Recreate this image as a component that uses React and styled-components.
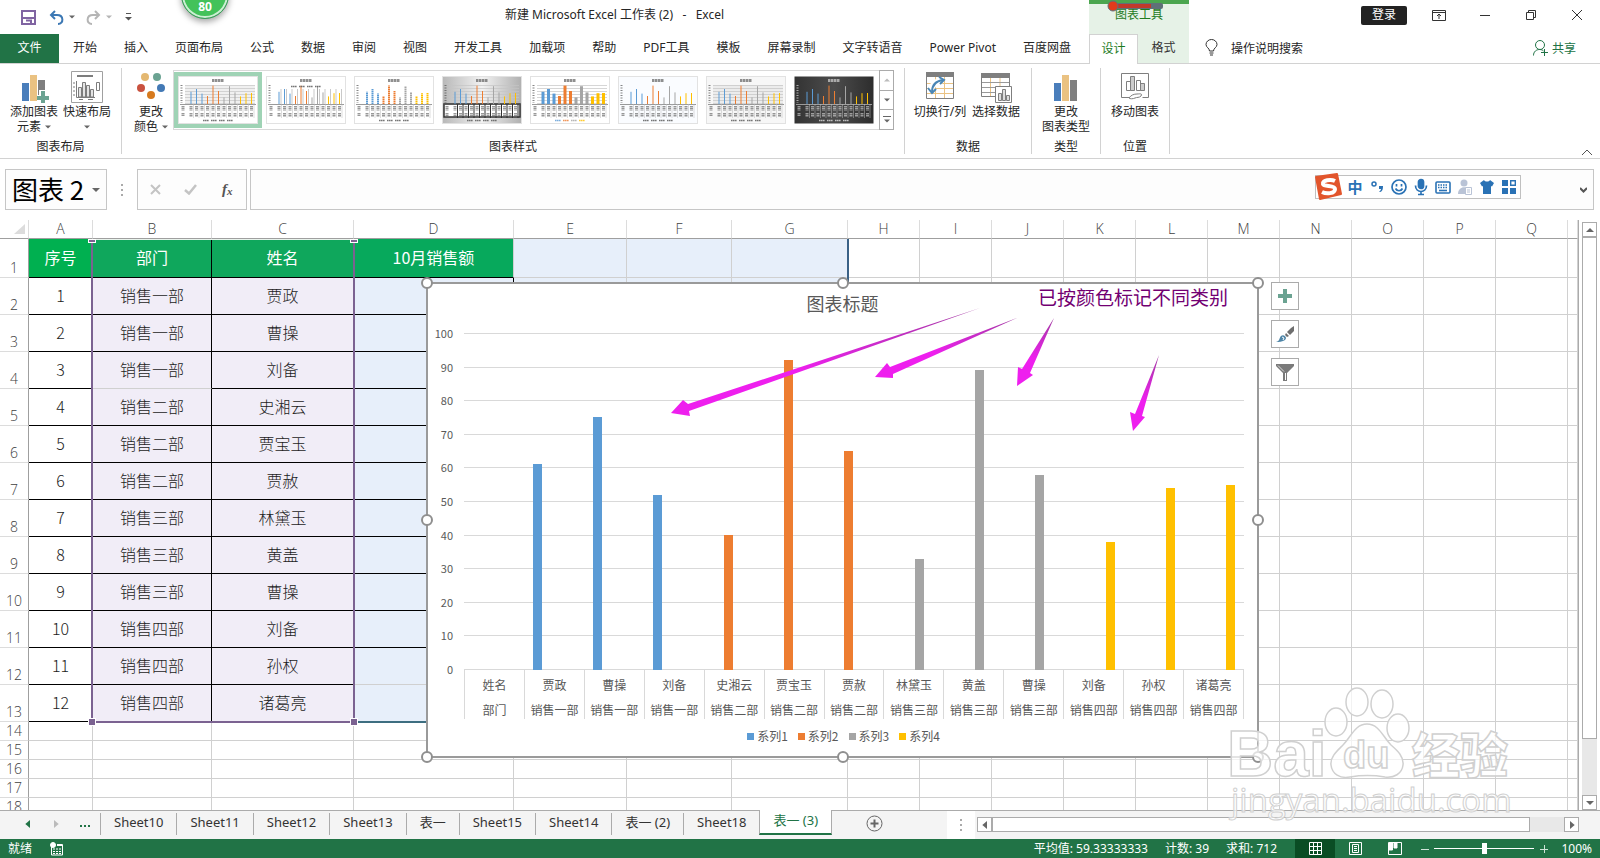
import React from "react";
import styled, { createGlobalStyle } from "styled-components";


const GlobalStyle = createGlobalStyle`
  * { box-sizing: border-box; }
  body {
    margin: 0;
    background: #fff;
    font-family: "Noto Sans", "Noto Sans CJK SC", sans-serif;
    font-size: 12px;
    color: #262626;
  }
  button, input {
    font: inherit;
    color: inherit;
    border: none;
    background: transparent;
    padding: 0;
    margin: 0;
  }
  svg { display: block; flex: none; }
`;

const Page = styled.div`
  display: flex;
  flex-direction: column;
  height: 100vh;
  overflow: hidden;
  position: relative;
`;

/* ---------- title bar and tabs ---------- */

const Header = styled.header`
  display: grid;
  grid-template-columns: 1089px 100px 1fr;
  grid-template-rows: 34px 29px;
  border-bottom: 1px solid #d2d2d2;
  flex: none;
`;

const TitleArea = styled.div`
  display: flex;
  align-items: center;
`;

const QuickAccess = styled.div`
  display: flex;
  align-items: center;
  gap: 5px;
  width: 140px;
  padding-left: 21px;
`;

const IconButton = styled.button`
  display: flex;
  align-items: center;
  justify-content: center;
  gap: 5px;
  margin-right: ${p => p.$after || 0}px;
`;

const WindowTitle = styled.h1`
  flex: 1;
  margin: 0;
  padding-bottom: 6px;
  font-size: 12px;
  font-weight: 400;
  text-align: center;
  white-space: pre;
`;

const ContextTitle = styled.div`
  background: #e6f2e7;
  border-top: 4px solid #4ba64f;
  color: #1e7b1e;
  text-align: center;
  line-height: 21px;
  position: relative;
`;

const Thermometer = styled.svg`
  position: absolute;
  left: 18px;
  top: -4px;
`;

const WindowButtons = styled.div`
  display: flex;
  align-items: center;
  justify-content: flex-end;
  padding-bottom: 4px;
`;

const LoginButton = styled.button`
  width: 46px;
  height: 19px;
  margin-right: 9px;
  border-radius: 2px;
  background: #222;
  color: #fff;
  line-height: 18px;
`;

const WindowButton = styled.button`
  width: 46px;
  height: 28px;
  display: flex;
  align-items: center;
  justify-content: center;
`;

const Ball = styled.div`
  position: absolute;
  left: 181px;
  top: -29px;
  width: 48px;
  height: 48px;
  border-radius: 50%;
  border: 1px solid #3c9a5c;
  background: #43c25a;
  box-shadow: inset 0 0 0 2px #cdeed4, 0 3px 6px rgba(0, 0, 0, 0.35);
  color: #fff;
  font-weight: 700;
  text-align: center;
  line-height: 16px;
  padding-top: 27px;
`;

const Tabs = styled.nav`
  display: flex;
  align-items: stretch;
  gap: 27px;
`;

const Tab = styled.button`
  white-space: nowrap;
  line-height: 26px;
  padding-bottom: 2px;
`;

const FileTab = styled(Tab)`
  width: 59px;
  margin-right: -13px;
  background: #217346;
  color: #fff;
`;

const ContextTabs = styled.div`
  display: flex;
  background: #e6f2e7;
`;

const ContextTab = styled(Tab)`
  width: ${p => (p.$active ? 49 : 51)}px;
  color: ${p => (p.$active ? "#1e7b1e" : "#333")};
  ${p => p.$active && `
    background: #fff;
    border: 1px solid #d2d2d2;
    border-bottom: none;
    margin-bottom: -1px;
  `}
`;

const HeaderTail = styled.div`
  display: flex;
  align-items: center;
  justify-content: space-between;
  padding: 0 24px 2px 16px;
`;

const TellMe = styled.button`
  display: flex;
  align-items: center;
  gap: 13px;
`;

const ShareButton = styled(TellMe)`
  gap: 4px;
  color: #217346;
`;

/* ---------- ribbon ---------- */

const Ribbon = styled.div`
  display: flex;
  height: 95px;
  padding: 4px 0;
  border-bottom: 1px solid #d2d2d2;
  position: relative;
  flex: none;
`;

const Group = styled.section`
  display: flex;
  flex-direction: column;
  width: ${p => p.$w}px;
  border-right: 1px solid #d2d2d2;
`;

const GroupBody = styled.div`
  display: flex;
  justify-content: ${p => (p.$center ? "center" : "flex-start")};
  padding-left: ${p => p.$left || 0}px;
  height: 72px;
`;

const GroupName = styled.div`
  text-align: center;
  line-height: 14px;
`;

const RibbonButton = styled.button`
  display: flex;
  flex-direction: column;
  align-items: center;
  width: ${p => p.$w || 52}px;
  padding-top: 3px;
  line-height: 15px;
  white-space: nowrap;
  svg.big { margin-bottom: 1px; }
`;

const WithCaret = styled.span`
  display: flex;
  align-items: center;
  gap: 4px;
  height: 15px;
`;

const Gallery = styled.div`
  display: flex;
  height: 60px;
  margin-top: 2px;
  border: 1px solid #d9d9d9;
`;

const GalleryItem = styled.button`
  width: 88px;
  height: 56px;
  margin-top: 1px;
  border: 4px solid ${p => (p.$active ? "#9fd3b5" : "transparent")};
`;

const GalleryScroll = styled.div`
  display: flex;
  flex-direction: column;
  width: 15px;
  margin: -1px -1px -1px 1px;
`;

const GalleryStep = styled.button`
  flex: 1;
  display: flex;
  align-items: center;
  justify-content: center;
  border: 1px solid #ababab;
  margin-bottom: -1px;
  &:last-child { margin-bottom: 0; }
`;

const Collapse = styled.button`
  position: absolute;
  right: 7px;
  bottom: 2px;
`;

/* ---------- formula bar ---------- */

const FormulaBar = styled.div`
  display: flex;
  height: 61px;
  padding: 10px 6px 10px 5px;
  flex: none;
`;

const BarBox = styled.div`
  display: flex;
  align-items: center;
  justify-content: ${p => (p.$spread ? "space-between" : "flex-start")};
  flex: ${p => (p.$w ? "none" : 1)};
  width: ${p => (p.$w ? p.$w + "px" : "auto")};
  margin-right: ${p => p.$after || 0}px;
  border: 1px solid #c6c6c6;
  background: #fdfdfd;
  position: relative;
  padding: 0 ${p => (p.$spread ? 12 : 6)}px;
`;

const NameInput = styled.input`
  flex: 1;
  min-width: 0;
  height: 39px;
  padding-bottom: 2px;
  font-family: "Noto Sans CJK SC", sans-serif;
  font-size: 26px;
  color: #000;
`;

const FormulaInput = styled.input`
  flex: 1;
  height: 36px;
`;

const Dots = styled.div`
  width: 30px;
  display: flex;
  align-items: center;
  justify-content: center;
`;

const Ime = styled.div`
  position: absolute;
  right: 72px;
  top: 5px;
  height: 24px;
  display: flex;
  align-items: center;
  gap: 4px;
  padding: 0 2px 0 30px;
  border: 1px solid #c0c0c0;
  background: #fff;
  color: #2a72b5;
`;

const ImeLogo = styled.svg`
  position: absolute;
  left: -2px;
  top: -4px;
`;

const ImeButton = styled.button`
  width: 18px;
  height: 20px;
  display: flex;
  align-items: center;
  justify-content: center;
  font-size: 15px;
  font-weight: 700;
  line-height: 20px;
`;

/* ---------- sheet ---------- */

const Workspace = styled.main`
  display: flex;
  flex: 1;
  min-height: 0;
`;

const Sheet = styled.div`
  flex: 1;
  min-width: 0;
  overflow: hidden;
  position: relative;
  border-right: 1px solid #ababab;
`;

const Grid = styled.table`
  width: 100%;
  table-layout: fixed;
  border-collapse: separate;
  border-spacing: 0;
  font-size: 16px;
  font-weight: 300;
  font-family: "Noto Sans CJK SC", sans-serif;
  line-height: 18px;
`;

const ColHead = styled.th`
  height: 19px;
  padding: 0;
  border-right: 1px solid #dcdcdc;
  border-bottom: 1px solid #9f9f9f;
  color: #404040;
  font-family: "Open Sans", sans-serif;
  font-size: 14px;
  font-weight: 300;
  svg { margin-left: 14px; }
`;

const RowHead = styled.th`
  padding: 0;
  height: ${p => p.$h}px;
  border-right: 1px solid #9f9f9f;
  border-bottom: 1px solid #dcdcdc;
  color: #404040;
  font-family: "Open Sans", sans-serif;
  font-size: 14px;
  font-weight: 300;
  vertical-align: bottom;
`;

const fills = {
  green: "#00b050",
  greenPurple: "#0fa75c",
  greenBlue: "#07a95c",
  purple: "#f1edf7",
  blue: "#e7effa",
};

const Cell = styled.td`
  padding: 0 0 2px;
  text-align: center;
  background: ${p => fills[p.$fill] || "transparent"};
  color: ${p => (p.$head ? "#fff" : "#1c1c1c")};
  font-weight: ${p => (p.$head ? 400 : 300)};
  border-right: 1px solid ${p => (p.$inkRight ? "#000" : "#d0d0d0")};
  border-bottom: 1px solid ${p => (p.$inkBottom ? "#000" : "#d0d0d0")};
`;

const EmptyCell = styled(Cell)`
  padding: 0;
`;

const PurpleRange = styled.div`
  position: absolute;
  left: 91px;
  top: 19px;
  width: 264px;
  height: 484px;
  border: 2px solid #7b6291;
  border-top: 1px solid #e8f3ec;
`;

const BlueRange = styled.div`
  position: absolute;
  left: 355px;
  top: 19px;
  width: 494px;
  height: 484px;
  border-right: 2px solid #3a6186;
  border-bottom: 2px solid #3d6e80;
`;

const Knob = styled.span`
  position: absolute;
  width: 6px;
  height: ${p => (p.$edge === "top" ? 2 : 6)}px;
  background: #7b6291;
  outline: 1px solid #fff;
  ${p => p.$side}: -4px;
  ${p => p.$edge}: ${p => (p.$edge === "top" ? 0 : -4)}px;
`;

/* ---------- chart ---------- */

const Chart = styled.section`
  position: absolute;
  left: 426px;
  top: 62px;
  width: 833px;
  height: 476px;
  padding-right: 13px;
  background: #fff;
  border: 2px solid #9a9a9a;
  color: #595959;
  font-family: "Noto Sans CJK SC", sans-serif;
`;

const Handle = styled.i`
  position: absolute;
  width: 12px;
  height: 12px;
  border: 2px solid #8f8f8f;
  border-radius: 50%;
  background: #fff;
  left: ${p => p.$x};
  top: ${p => p.$y};
  transform: translate(-50%, -50%);
`;

const ChartTitle = styled.h2`
  margin: 0 -13px 11px 0;
  font-size: 18px;
  font-weight: 400;
  line-height: 38px;
  text-align: center;
`;

const Plot = styled.div`
  display: grid;
  grid-template-columns: 36px 1fr;
  grid-template-rows: 337px;
`;

const AxisLabels = styled.div`
  display: flex;
  flex-direction: column;
  justify-content: space-between;
  padding-right: 11px;
  text-align: right;
  font-size: 11px;
  span {
    height: 1px;
    line-height: 1px;
  }
`;

const Lines = styled.div`
  grid-area: 1 / 2;
  display: flex;
  flex-direction: column;
  justify-content: space-between;
  i {
    height: 1px;
    background: #d9d9d9;
  }
`;

const Bars = styled.div`
  grid-area: 1 / 2;
  display: grid;
  grid-template-columns: repeat(13, 1fr);
  grid-template-rows: 100%;
`;

const Cluster = styled.div`
  display: flex;
  align-items: flex-end;
  justify-content: center;
  gap: 2px;
`;

const Bar = styled.div`
  width: 9px;
  background: ${p => p.$color};
`;

const Categories = styled.div`
  display: grid;
  grid-template-columns: repeat(13, 1fr);
  height: 49px;
  margin-left: 36px;
  border-left: 1px solid #d9d9d9;
`;

const Category = styled.div`
  display: flex;
  flex-direction: column;
  height: 49px;
  padding-top: 2px;
  border-right: 1px solid #d9d9d9;
  text-align: center;
  line-height: 25px;
  white-space: nowrap;
`;

const Legend = styled.div`
  display: flex;
  justify-content: center;
  gap: 10px;
  margin: 8px -15px 0 0;
  line-height: 18px;
`;

const LegendItem = styled.span`
  display: flex;
  align-items: center;
  gap: 3px;
  &::before {
    content: "";
    width: 7px;
    height: 7px;
    background: ${p => p.$color};
  }
`;

const Note = styled.p`
  position: absolute;
  right: 29px;
  top: 2px;
  margin: 0;
  font-size: 19px;
  font-weight: 400;
  line-height: 22px;
  color: #720072;
`;

const Arrows = styled.svg`
  position: absolute;
  left: -2px;
  top: -2px;
`;

const ChartTools = styled.div`
  position: absolute;
  left: 1271px;
  top: 62px;
  display: flex;
  flex-direction: column;
  gap: 10px;
`;

const ChartTool = styled.button`
  width: 28px;
  height: 28px;
  display: flex;
  align-items: center;
  justify-content: center;
  border: 1px solid #ababab;
  background: #fff;
`;

/* ---------- scroll bars, sheet tabs, status ---------- */

const VScroll = styled.div`
  display: flex;
  flex-direction: column;
  width: 15px;
  margin: 2px 3px 0;
  background: #e8e8e8;
`;

const HScroll = styled.div`
  display: flex;
  flex: 1;
  height: 15px;
  margin: 6px 21px 0 2px;
  background: #e8e8e8;
`;

const ScrollButton = styled.button`
  width: 15px;
  height: 15px;
  flex: none;
  display: flex;
  align-items: center;
  justify-content: center;
  border: 1px solid #ababab;
  background: #fff;
`;

const Thumb = styled.div`
  flex: ${p => p.$size};
  border: 1px solid #ababab;
  background: #fff;
`;

const Gap = styled.div`
  flex: ${p => p.$size};
`;

const SheetBar = styled.div`
  display: flex;
  height: 29px;
  background: #f4f4f4;
  border-top: 1px solid #ababab;
  flex: none;
`;

const SheetNav = styled.div`
  display: flex;
  align-items: center;
  justify-content: flex-end;
  gap: 20px;
  width: 101px;
  height: 22px;
  padding-right: 9px;
  border-right: 1px solid #ababab;
  margin-top: 2px;
`;

const SheetTab = styled.button`
  height: 22px;
  margin-top: 2px;
  padding: 0 13px 4px;
  border-right: 1px solid #ababab;
  font-size: 13px;
  line-height: 18px;
  white-space: nowrap;
  color: #333;
  ${p => p.$active && `
    height: 25px;
    margin: -1px 0 0 -1px;
    padding-top: 1px;
    background: #fff;
    color: #217346;
    border-left: 1px solid #ababab;
    border-bottom: 2px solid #217346;
  `}
`;

const AddSheet = styled.button`
  margin: 4px 64px 0 34px;
  height: 17px;
`;

const Splitter = styled.div`
  display: flex;
  align-items: center;
  justify-content: center;
  width: 28px;
  background: #fff;
`;

const StatusBar = styled.footer`
  display: flex;
  align-items: center;
  gap: 18px;
  height: 19px;
  background: #217346;
  color: #fff;
  padding: 0 8px;
  flex: none;
  line-height: 18px;
`;

const Stats = styled.div`
  display: flex;
  gap: 17px;
  margin-left: auto;
`;

const ViewControls = styled.div`
  display: flex;
  align-items: center;
`;

const ViewButton = styled.button`
  width: 40px;
  height: 19px;
  display: flex;
  align-items: center;
  justify-content: center;
  background: ${p => (p.$active ? "#0a4d24" : "transparent")};
`;

const ZoomStep = styled.button`
  width: 19px;
  height: 19px;
  display: flex;
  align-items: center;
  justify-content: center;
`;

const ZoomRange = styled.input`
  appearance: none;
  width: 100px;
  height: 19px;
  background: linear-gradient(#fff, #fff) center / 100% 1px no-repeat;
  &::-webkit-slider-thumb {
    appearance: none;
    width: 5px;
    height: 11px;
    background: #fff;
  }
`;

const ZoomValue = styled.span`
  width: 39px;
  text-align: right;
`;

const Watermark = styled.svg`
  position: absolute;
  right: 76px;
  bottom: 18px;
  pointer-events: none;
`;

const tabs = ["开始", "插入", "页面布局", "公式", "数据", "审阅", "视图", "开发工具", "加载项", "帮助", "PDF工具", "模板", "屏幕录制", "文字转语音", "Power Pivot", "百度网盘"];

const columns = ["A", "B", "C", "D", "E", "F", "G", "H", "I", "J", "K", "L", "M", "N", "O", "P", "Q"];
const widths = [64, 119, 142, 160, 113, 105, 116, 72, 72, 72, 72, 72, 72, 72, 72, 72, 72];

const colors = ["#5b9bd5", "#ed7d31", "#a5a5a5", "#ffc000"];

const people = [
  { dept: "销售一部", name: "贾政", series: 0, value: 61 },
  { dept: "销售一部", name: "曹操", series: 0, value: 75 },
  { dept: "销售一部", name: "刘备", series: 0, value: 52 },
  { dept: "销售二部", name: "史湘云", series: 1, value: 40 },
  { dept: "销售二部", name: "贾宝玉", series: 1, value: 92 },
  { dept: "销售二部", name: "贾赦", series: 1, value: 65 },
  { dept: "销售三部", name: "林黛玉", series: 2, value: 33 },
  { dept: "销售三部", name: "黄盖", series: 2, value: 89 },
  { dept: "销售三部", name: "曹操", series: 2, value: 58 },
  { dept: "销售四部", name: "刘备", series: 3, value: 38 },
  { dept: "销售四部", name: "孙权", series: 3, value: 54 },
  { dept: "销售四部", name: "诸葛亮", series: 3, value: 55 },
];

const sheets = ["Sheet10", "Sheet11", "Sheet12", "Sheet13", "表一", "Sheet15", "Sheet14", "表一 (2)", "Sheet18", "表一 (3)"];

const carets = {
  down: "M0 1.5h6L3 4.5z",
  up: "M0 4.5h6L3 1.5z",
  left: "M4.5 0v6L1 3z",
  right: "M1.5 0v6L5 3z",
};

function Caret({ color = "#666", dir = "down", size = 6 }) {
  return <svg width={size} height={size} viewBox="0 0 6 6"><path d={carets[dir]} fill={color} /></svg>;
}

function AddElementIcon() {
  return (
    <svg className="big" width="30" height="32" viewBox="0 0 30 32">
      <path d="M3 12h7v18H3z" fill="#4a7ebb" />
      <path d="M11 4h7v26h-7z" fill="#eac282" />
      <path d="M19 9h7v21h-7z" fill="#7f7f7f" />
      <path d="M20 19h7v4h3v8h-3v1h-7v-2h-2v-6h2z" fill="#fff" />
      <path d="M22 20h4v5h4v4h-4v3h-4v-3h-4v-4h4z" fill="#6ba392" />
    </svg>
  );
}

function LayoutIcon() {
  return (
    <svg className="big" width="32" height="32" viewBox="0 0 32 32" fill="none" stroke="#7d7d7d">
      <path d="M.5 .5h31v31H.5z" fill="#fff" stroke="#a0a0a0" />
      <path d="M6 5h16" strokeWidth="2" />
      <path d="M5.5 10v16.5H24M2 12h2M2 16h2M2 20h2M2 24h2M8 28.5h4M17 28.5h5" />
      <path d="M7.5 16.5h3V26h-3zM11.5 11.5h3V26h-3zM15.5 14.5h3V26h-3zM19.5 18.5h3V26h-3z" fill="#e4e4e4" />
      <path d="M25.5 11.5h3v8h-3z" />
    </svg>
  );
}

function ColorsIcon() {
  return (
    <svg className="big" width="32" height="32" viewBox="0 0 32 32">
      <circle cx="10" cy="6" r="4" fill="#e4b871" />
      <circle cx="22" cy="6" r="4" fill="#6ba392" />
      <circle cx="6" cy="17" r="4" fill="#c9523f" />
      <circle cx="26" cy="17" r="4" fill="#4379b5" />
      <circle cx="16" cy="24" r="4" fill="#d67a1e" />
    </svg>
  );
}

function SwitchIcon() {
  return (
    <svg className="big" width="30" height="32" viewBox="0 0 30 32" fill="none">
      <path d="M1.5 2.5h27v25h-27z" fill="#fff" stroke="#7f7f7f" />
      <path d="M1 1h28v5H1z" fill="#7f7f7f" />
      <path d="M2 12.5h26M2 17.5h26M2 22.5h26M10.5 6v21M19.5 6v21" stroke="#eac282" />
      <path d="M6 21c0-7 5-11 12-12" stroke="#fff" strokeWidth="6" />
      <path d="M7 21c0-7 4-11 11-12" stroke="#4a86b5" strokeWidth="2" />
      <path d="M14 6l5 3-4 4M3 17l4 5 4-4" stroke="#4a86b5" strokeWidth="2" />
    </svg>
  );
}

function SelectDataIcon() {
  return (
    <svg className="big" width="32" height="32" viewBox="0 0 32 32" fill="none">
      <path d="M1.5 3.5h28v22h-28z" fill="#fff" stroke="#7f7f7f" />
      <path d="M1 2h29v5H1z" fill="#7f7f7f" />
      <path d="M10.5 7v18M20 7v18" stroke="#eac282" />
      <path d="M2 11.5h27M2 16.5h27M2 21.5h27" stroke="#999" />
      <path d="M15.5 15.5h16v16h-16z" fill="#fff" stroke="#7f7f7f" />
      <path d="M18.5 22.5h3v7h-3zM22.5 18.5h3v11h-3zM26.5 24.5h3v5h-3z" fill="#ddd" stroke="#7f7f7f" />
    </svg>
  );
}

function ChartTypeIcon() {
  return (
    <svg className="big" width="26" height="32" viewBox="0 0 26 32">
      <path d="M1 12h7v18H1z" fill="#4a7ebb" />
      <path d="M9 4h7v26H9z" fill="#eac282" />
      <path d="M17 9h7v21h-7z" fill="#7f7f7f" />
    </svg>
  );
}

function MoveChartIcon() {
  return (
    <svg className="big" width="30" height="32" viewBox="0 0 30 32" fill="none" stroke="#7f7f7f">
      <path d="M9 26.5H1.500v-24h27v24h-6" />
      <path d="M6.5 10.5h4v9h-4z" />
      <path d="M10.5 5.5h4v14h-4zM20.5 12.5h4v7h-4z" fill="#ccc" />
      <path d="M16.5 9.5h4v10h-4z" />
      <path d="M9 27c2-3 5-4 8-4 2 0 6-1 4 2-2 2-4 1-6 2s-5 1-6 0z" fill="#fff" />
    </svg>
  );
}

const looks = [
  { bg: "#fff", w: 1, grid: true, band: "#f0f0f0" },
  { bg: "#fff", w: 1, drop: true },
  { bg: "#fff", w: 2, dotted: true },
  { bg: "url(#silver)", w: 1, box: "#333", grid: true },
  { bg: "#fff", w: 3, grid: true },
  { bg: "#fafcff", w: 1 },
  { bg: "#f7f7f7", w: 1, grid: true, band: "#ececec" },
  { bg: "url(#coal)", w: 1, dark: true },
];

function MiniChart({ look }) {
  const ink = look.dark ? "#ddd" : "#555";
  return (
    <svg width="80" height="48" viewBox="0 0 80 48">
      <defs>
        <linearGradient id="silver"><stop stopColor="#b8b8b8" /><stop offset=".5" stopColor="#f2f2f2" /><stop offset="1" stopColor="#b0b0b0" /></linearGradient>
        <linearGradient id="coal"><stop stopColor="#333" /><stop offset=".5" stopColor="#4c4c4c" /><stop offset="1" stopColor="#2d2d2d" /></linearGradient>
      </defs>
      <rect x=".5" y=".5" width="79" height="47" fill={look.bg} stroke={look.dark ? "none" : "#e2e2e2"} />
      {look.band && <rect x="7" y="9" width="70" height="18" fill={look.band} />}
      <path d="M34 4.5h12" stroke={ink} strokeWidth="3" strokeDasharray="2.5 .5" opacity=".65" />
      {look.grid && [9, 12, 15, 18, 21, 24, 27].map(y => <path key={y} d={`M7 ${y}.5h70`} stroke="#c4c4c4" strokeWidth=".7" />)}
      <path d="M3.5 9v18" stroke={ink} strokeWidth="2" strokeDasharray="1 1.5" opacity=".7" />
      {look.box && <path d="M2 28h76v13H2z" fill="#fff" stroke={look.box} strokeWidth="1.5" />}
      <path d="M2 28.5h76" stroke={ink} strokeWidth=".6" />
      {people.map((p, i) => {
        const x = 13 + i * 5.5;
        return (
          <g key={i}>
            {look.drop && <path d={`M${x + 2} 13v15`} stroke="#c9c9c9" />}
            <path d={`M${x} 28V${28 - p.value / 5}`} stroke={colors[p.series]} strokeWidth={look.w} strokeDasharray={look.dotted ? "1.5 .5" : "none"} />
            <path d={`M${x} 30v5M${x} 37v4`} stroke={ink} strokeWidth="3" strokeDasharray="1.2 .5" opacity=".6" />
            <path d={`M${x + 2.5} 28v14`} stroke={look.box || "#bbb"} strokeWidth={look.box ? 1 : 0.5} />
          </g>
        );
      })}
      <path d="M5 30v5M5 37v3" stroke={ink} strokeWidth="3" strokeDasharray="1.2 .5" opacity=".6" />
      {[25, 33, 41, 49].map((x, i) => (
        <path key={x} d={`M${x} ${look.drop ? 10.5 : 44.5}h6`} stroke={look.w === 3 ? colors[i] : ink} strokeWidth="1.5" strokeDasharray="1.5 .4" opacity=".8" />
      ))}
    </svg>
  );
}

function TopHeader() {
  return (
    <Header>
      <TitleArea>
        <QuickAccess>
          <IconButton aria-label="保存" $after={8}>
            <svg width="15" height="15" viewBox="0 0 15 15" fill="none" stroke="#8064a2"><path d="M1 1h13v13H1z" strokeWidth="2" /><path d="M2 8h11" strokeWidth="2" /><path d="M5 10.5h5V14" strokeWidth="2" /></svg>
          </IconButton>
          <IconButton aria-label="撤消" $after={6}>
            <svg width="15" height="15" viewBox="0 0 15 15" fill="none" stroke="#3c78b4" strokeWidth="2"><path d="M6 1L2 5l4 4" /><path d="M2 5h6c7 0 7 9 1 9" /></svg>
            <Caret />
          </IconButton>
          <IconButton aria-label="恢复" $after={8}>
            <svg width="15" height="15" viewBox="0 0 15 15" fill="none" stroke="#b5b5b5" strokeWidth="2"><path d="M9 1l4 4-4 4" /><path d="M13 5H7c-7 0-7 9-1 9" /></svg>
            <Caret color="#b5b5b5" />
          </IconButton>
          <IconButton aria-label="自定义">
            <svg width="7" height="8" viewBox="0 0 7 8"><path d="M1 .5h5" stroke="#555" /><path d="M0 4h7L3.5 7.5z" fill="#555" /></svg>
          </IconButton>
        </QuickAccess>
        <WindowTitle>{"新建 Microsoft Excel 工作表 (2)   -   Excel"}</WindowTitle>
      </TitleArea>
      <ContextTitle>
        图表工具
        <Thermometer width="56" height="13" viewBox="0 0 56 13">
          <rect x="3" y="3" width="53" height="6" rx="2" fill="#5f7078" />
          <rect x="8" y="4" width="36" height="4" fill="#c0392b" />
          <circle cx="6" cy="6" r="5" fill="#e23a1c" stroke="#5f7078" />
        </Thermometer>
      </ContextTitle>
      <WindowButtons>
        <LoginButton>登录</LoginButton>
        <WindowButton aria-label="功能区显示选项">
          <svg width="14" height="11" viewBox="0 0 14 11" fill="none" stroke="#333"><path d="M.5 .5h13v10H.5zM.5 2.5h13M7 9V4M5 6l2-2 2 2" /></svg>
        </WindowButton>
        <WindowButton aria-label="最小化">
          <svg width="10" height="10" viewBox="0 0 10 10" stroke="#333"><path d="M0 5.5h10" /></svg>
        </WindowButton>
        <WindowButton aria-label="还原">
          <svg width="10" height="10" viewBox="0 0 10 10" fill="none" stroke="#333"><path d="M.5 2.5h7v7h-7zM2.5 2.5v-2h7v7h-2" /></svg>
        </WindowButton>
        <WindowButton aria-label="关闭">
          <svg width="10" height="10" viewBox="0 0 10 10" stroke="#333"><path d="M0 0l10 10M10 0L0 10" /></svg>
        </WindowButton>
      </WindowButtons>

      <Tabs>
        <FileTab>文件</FileTab>
        {tabs.map(t => <Tab key={t}>{t}</Tab>)}
      </Tabs>
      <ContextTabs>
        <ContextTab $active>设计</ContextTab>
        <ContextTab>格式</ContextTab>
      </ContextTabs>
      <HeaderTail>
        <TellMe>
          <svg width="13" height="17" viewBox="0 0 13 17" fill="none" stroke="#333"><path d="M4.5 12c0-3-3.5-3.5-3.5-6.5a5.5 5 0 0 1 11 0c0 3-3.5 3.5-3.5 6.5zM4.500 14h4M5 16h3" /></svg>
          操作说明搜索
        </TellMe>
        <ShareButton>
          <svg width="15" height="16" viewBox="0 0 15 16" fill="none" stroke="#217346"><circle cx="7" cy="5" r="4.5" /><path d="M.5 15.5c0-4 3-6 6-6 2 0 3 .5 4 1.5M8 12.5h7M11.5 9v7" /></svg>
          共享
        </ShareButton>
      </HeaderTail>
    </Header>
  );
}

function RibbonArea() {
  return (
    <Ribbon>
      <Group $w={122}>
        <GroupBody $left={8}>
          <RibbonButton><AddElementIcon />添加图表<WithCaret>元素 <Caret /></WithCaret></RibbonButton>
          <RibbonButton $w={54}><LayoutIcon />快速布局<WithCaret><Caret /></WithCaret></RibbonButton>
        </GroupBody>
        <GroupName>图表布局</GroupName>
      </Group>
      <Group $w={783}>
        <GroupBody $left={7}>
          <RibbonButton $w={44}><ColorsIcon />更改<WithCaret>颜色 <Caret /></WithCaret></RibbonButton>
          <Gallery>
            {looks.map((look, i) => (
              <GalleryItem key={i} $active={i === 0} aria-label={`样式 ${i + 1}`}><MiniChart look={look} /></GalleryItem>
            ))}
            <GalleryScroll>
              <GalleryStep aria-label="上一行"><Caret dir="up" color="#bbb" /></GalleryStep>
              <GalleryStep aria-label="下一行"><Caret /></GalleryStep>
              <GalleryStep aria-label="其他">
                <svg width="8" height="8" viewBox="0 0 8 8"><path d="M0 .5h8" stroke="#666" /><path d="M1 3.5h6L4 6.5z" fill="#666" /></svg>
              </GalleryStep>
            </GalleryScroll>
          </Gallery>
        </GroupBody>
        <GroupName>图表样式</GroupName>
      </Group>
      <Group $w={127}>
        <GroupBody $center>
          <RibbonButton $w={56}><SwitchIcon />切换行/列</RibbonButton>
          <RibbonButton $w={56}><SelectDataIcon />选择数据</RibbonButton>
        </GroupBody>
        <GroupName>数据</GroupName>
      </Group>
      <Group $w={69}>
        <GroupBody $center>
          <RibbonButton><ChartTypeIcon /><span>更改</span><span>图表类型</span></RibbonButton>
        </GroupBody>
        <GroupName>类型</GroupName>
      </Group>
      <Group $w={69}>
        <GroupBody $center>
          <RibbonButton><MoveChartIcon />移动图表</RibbonButton>
        </GroupBody>
        <GroupName>位置</GroupName>
      </Group>
      <Collapse aria-label="折叠功能区">
        <svg width="12" height="8" viewBox="0 0 12 8" fill="none" stroke="#555"><path d="M1 7l5-5 5 5" /></svg>
      </Collapse>
    </Ribbon>
  );
}

function VerticalDots() {
  return <svg width="2" height="12" viewBox="0 0 2 12"><path d="M0 0h2v2H0zM0 5h2v2H0zM0 10h2v2H0z" fill="#aaa" /></svg>;
}

function Formula() {
  return (
    <FormulaBar>
      <BarBox $w={102}>
        <NameInput aria-label="名称框" defaultValue="图表 2" />
        <Caret size={8} />
      </BarBox>
      <Dots><VerticalDots /></Dots>
      <BarBox $w={110} $spread $after={3}>
        <IconButton aria-label="取消"><svg width="11" height="11" viewBox="0 0 11 11" stroke="#c4c4c4" strokeWidth="2"><path d="M1 1l9 9M10 1l-9 9" /></svg></IconButton>
        <IconButton aria-label="输入"><svg width="13" height="11" viewBox="0 0 13 11" fill="none" stroke="#c4c4c4" strokeWidth="2.5"><path d="M1 6l4 3.5L12 1" /></svg></IconButton>
        <IconButton aria-label="插入函数">
          <svg width="14" height="16" viewBox="0 0 14 16" fill="#555" fontFamily="Liberation Serif, serif" fontStyle="italic" fontWeight="700"><text x="2" y="12" fontSize="15">f</text><text x="7" y="13" fontSize="11">x</text></svg>
        </IconButton>
      </BarBox>
      <BarBox>
        <FormulaInput aria-label="编辑栏" />
        <Ime>
          <ImeLogo width="30" height="29" viewBox="0 0 30 29">
            <path d="M2 5L23 2l4 20-21 5z" fill="#e2552c" stroke="#e2552c" strokeWidth="2" strokeLinejoin="round" />
            <path d="M21 9c-4-2-13-1-12 3 1 3 12 1 12 5 0 5-9 5-13 3" fill="none" stroke="#fff" strokeWidth="4" />
          </ImeLogo>
          <ImeButton>中</ImeButton>
          <ImeButton aria-label="标点"><svg width="14" height="14" viewBox="0 0 14 14"><circle cx="4" cy="4" r="2" fill="none" stroke="#2a72b5" strokeWidth="1.5" /><path d="M9 6h4c0 4-1 6-4 6 1-1 2-2 2-3H9z" fill="#2a72b5" /></svg></ImeButton>
          <ImeButton aria-label="表情"><svg width="16" height="16" viewBox="0 0 16 16" fill="none" stroke="#2a72b5" strokeWidth="1.7"><circle cx="8" cy="8" r="7" /><path d="M5.5 5v2.5M10.5 5v2.5M4.5 9.5c1.5 3 5.5 3 7 0" /></svg></ImeButton>
          <ImeButton aria-label="语音"><svg width="14" height="18" viewBox="0 0 14 18" fill="none" stroke="#2a72b5" strokeWidth="1.7"><rect x="4.5" y="1.5" width="5" height="9" rx="2.5" fill="#2a72b5" /><path d="M1.5 7.5c0 8 11 8 11 0M7 13v4M4 16.5h6" /></svg></ImeButton>
          <ImeButton aria-label="软键盘"><svg width="16" height="13" viewBox="0 0 16 13" fill="none" stroke="#2a72b5" strokeWidth="1.6"><rect x="1" y="1" width="14" height="11" rx="1" /><path d="M3 4h10M3 6.5h10" strokeDasharray="1.5 1" /><path d="M4 9.5h8" /></svg></ImeButton>
          <ImeButton aria-label="个人中心"><svg width="14" height="16" viewBox="0 0 14 16" fill="#b9c3d6"><circle cx="6" cy="4" r="3.5" /><path d="M0 15c0-9 12-9 12 0z" /><path d="M7.5 8.5h6v7h-6z" fill="#fff" stroke="#b9c3d6" /><path d="M9 11h3M9 13h3" stroke="#b9c3d6" /></svg></ImeButton>
          <ImeButton aria-label="皮肤"><svg width="14" height="14" viewBox="0 0 14 14"><path d="M4 0c1 2 5 2 6 0l4 3-2 3.5-1-.5v8H3V6l-1 .5L0 3z" fill="#2a72b5" /></svg></ImeButton>
          <ImeButton aria-label="工具箱"><svg width="14" height="14" viewBox="0 0 14 14" fill="#2a72b5"><path d="M0 0h6v6H0zM0 8h6v6H0zM8 8h6v6H8z" /><path d="M8.7 .7h4.6v4.6H8.7z" fill="none" stroke="#2a72b5" strokeWidth="1.4" /></svg></ImeButton>
        </Ime>
        <IconButton aria-label="展开编辑栏"><svg width="7" height="6" viewBox="0 0 7 6" fill="none" stroke="#555" strokeWidth="2"><path d="M0 1l3.5 3.5L7 1" /></svg></IconButton>
      </BarBox>
    </FormulaBar>
  );
}

function cellProps(row, col) {
  if (row > 12 || col > 6) return {};
  if (row === 0) {
    if (col > 3) return { $fill: "blue" };
    return {
      $head: true,
      $fill: col === 0 ? "green" : col === 3 ? "greenBlue" : "greenPurple",
      $inkBottom: true,
      $inkRight: col === 1,
    };
  }
  if (col === 0) return { $inkBottom: true };
  if (col < 3) return { $fill: "purple", $inkRight: true, $inkBottom: !(col === 1 && row === 3) };
  if (col === 3) return { $fill: "blue", $inkRight: true, $inkBottom: row !== 11 };
  return { $fill: "blue" };
}

function cellText(row, col) {
  if (row === 0) return ["序号", "部门", "姓名", "10月销售额"][col];
  const p = people[row - 1];
  if (!p) return null;
  return [row, p.dept, p.name][col];
}

function SheetGrid() {
  return (
    <Grid>
      <colgroup>
        <col width="29" />
        {widths.map((w, i) => <col key={i} width={w} />)}
        <col />
      </colgroup>
      <thead>
        <tr>
          <ColHead><svg width="11" height="11" viewBox="0 0 11 11"><path d="M11 0v10H0z" fill="#dcdcdc" /></svg></ColHead>
          {columns.map(c => <ColHead key={c}>{c}</ColHead>)}
          <ColHead />
        </tr>
      </thead>
      <tbody>
        {Array.from({ length: 18 }, (_, row) => (
          <tr key={row}>
            <RowHead $h={row === 0 ? 39 : row < 13 ? 37 : 19}>{row + 1}</RowHead>
            {columns.map((c, col) => {
              const text = cellText(row, col);
              return text
                ? <Cell key={c} {...cellProps(row, col)}>{text}</Cell>
                : <EmptyCell key={c} {...cellProps(row, col)} />;
            })}
            <EmptyCell />
          </tr>
        ))}
      </tbody>
    </Grid>
  );
}

const stops = ["-1px", "50%", "calc(100% + 1px)"];

function SalesChart() {
  return (
    <Chart>
      <ChartTitle>图表标题</ChartTitle>
      <Plot>
        <AxisLabels>
          {[100, 90, 80, 70, 60, 50, 40, 30, 20, 10, 0].map(n => <span key={n}>{n}</span>)}
        </AxisLabels>
        <Lines>{Array.from({ length: 11 }, (_, i) => <i key={i} />)}</Lines>
        <Bars>
          <Cluster />
          {people.map((p, i) => (
            <Cluster key={i}>
              {colors.map((color, s) => (
                <Bar key={s} $color={color} style={{ height: s === p.series ? `${p.value}%` : 0 }} />
              ))}
            </Cluster>
          ))}
        </Bars>
      </Plot>
      <Categories>
        <Category><span>姓名</span><span>部门</span></Category>
        {people.map((p, i) => <Category key={i}><span>{p.name}</span><span>{p.dept}</span></Category>)}
      </Categories>
      <Legend>
        {colors.map((c, i) => <LegendItem key={c} $color={c}>系列{i + 1}</LegendItem>)}
      </Legend>
      <Arrows width="833" height="476" viewBox="426 282 833 476">
        <defs>
          <linearGradient id="fadeRight"><stop offset=".4" stopColor="#ee1fee" /><stop offset="1" stopColor="#a03aa0" /></linearGradient>
          <linearGradient id="fadeUp" x1="0" y1="1" x2="0" y2="0"><stop offset=".4" stopColor="#ee1fee" /><stop offset="1" stopColor="#a03aa0" /></linearGradient>
        </defs>
        <path d="M671 413L683 400L688 404L980 308L689 411L690 416z" fill="url(#fadeRight)" />
        <path d="M875 377L887 363L890 367L1019 317L893 374L893 378z" fill="url(#fadeRight)" />
        <path d="M1017 386L1018 367L1022 369L1054 318L1030 373L1033 375z" fill="url(#fadeUp)" />
        <path d="M1133 431L1130 412L1135 414L1159 355L1142 416L1145 417z" fill="url(#fadeUp)" />
      </Arrows>
      <Note>已按颜色标记不同类别</Note>
      {stops.map((y, j) => stops.map((x, i) => (
        i === 1 && j === 1 ? null : <Handle key={x + y} $x={x} $y={y} />
      )))}
    </Chart>
  );
}

function Tools() {
  return (
    <ChartTools>
      <ChartTool aria-label="图表元素">
        <svg width="14" height="14" viewBox="0 0 14 14"><path d="M5 0h4v5h5v4H9v5H5V9H0V5h5z" fill="#6ba392" /></svg>
      </ChartTool>
      <ChartTool aria-label="图表样式">
        <svg width="18" height="18" viewBox="0 0 18 18">
          <path d="M18 1v5l-4 4-3-3 4-4z" fill="#6e6e6e" />
          <path d="M10 8l3 3-2 1-2-2z" fill="#6e6e6e" />
          <path d="M0 17c4-1 3-4 5-6s5 0 5 2-3 4-10 4z" fill="#4f86a8" />
          <path d="M6 12l2 1-1 2" fill="none" stroke="#fff" />
        </svg>
      </ChartTool>
      <ChartTool aria-label="图表筛选器">
        <svg width="18" height="17" viewBox="0 0 18 17">
          <path d="M0 0h18v2l-7 7v8H7V9L0 2z" fill="#7a7a7a" />
          <path d="M9.5 9v7" stroke="#fff" />
          <path d="M2 1.5l6 6" stroke="#ddd" />
        </svg>
      </ChartTool>
    </ChartTools>
  );
}

function BaiduMark() {
  return (
    <Watermark width="300" height="170" viewBox="1224 670 300 170" fill="#fff" fillOpacity=".72" stroke="#d0d0d0" strokeWidth="1.5">
      <ellipse cx="1336" cy="722" rx="11" ry="14" />
      <ellipse cx="1357" cy="702" rx="11" ry="14" />
      <ellipse cx="1382" cy="704" rx="11" ry="14" />
      <ellipse cx="1398" cy="728" rx="11" ry="14" />
      <path d="M1367 724c12 0 16 13 24 21 7 6 13 12 12 20-1 9-9 13-18 12-12-2-23-2-35 0-10 2-18-3-19-12-1-8 6-14 12-20 8-8 12-21 24-21z" />
      <g fontFamily="Liberation Sans, sans-serif" fontWeight="700">
        <text x="1227" y="776" fontSize="64">Bai</text>
        <text x="1343" y="768" fontSize="38">du</text>
      </g>
      <text x="1412" y="773" fontFamily="Noto Sans CJK SC, sans-serif" fontSize="48" fontWeight="900">经验</text>
      <text x="1231" y="812" fontFamily="Open Sans, sans-serif" fontSize="33" strokeWidth="1">jingyan.baidu.com</text>
    </Watermark>
  );
}

function SheetTabs() {
  return (
    <SheetBar>
      <SheetNav>
        <IconButton aria-label="上一张"><Caret dir="left" color="#217346" size={8} /></IconButton>
        <IconButton aria-label="下一张"><Caret dir="right" color="#bbb" size={8} /></IconButton>
        <IconButton aria-label="更多工作表"><svg width="11" height="8" viewBox="0 0 11 8"><path d="M0 5h2v2H0zM4 5h2v2H4zM8 5h2v2H8z" fill="#217346" /></svg></IconButton>
      </SheetNav>
      {sheets.map((s, i) => <SheetTab key={s} $active={i === 9}>{s}</SheetTab>)}
      <AddSheet aria-label="新工作表">
        <svg width="17" height="17" viewBox="0 0 17 17" fill="none" stroke="#666"><circle cx="8.5" cy="8.5" r="7.5" /><path d="M4.5 8.5h8M8.5 4.5v8" strokeWidth="2" /></svg>
      </AddSheet>
      <Splitter><VerticalDots /></Splitter>
      <HScroll>
        <ScrollButton aria-label="向左滚动"><Caret dir="left" size={8} /></ScrollButton>
        <Thumb $size={94} />
        <Gap $size={6} />
        <ScrollButton aria-label="向右滚动"><Caret dir="right" size={8} /></ScrollButton>
      </HScroll>
    </SheetBar>
  );
}

function Status() {
  return (
    <StatusBar>
      <span>就绪</span>
      <svg width="13" height="14" viewBox="0 0 13 14" fill="none" stroke="#fff"><path d="M1.5 5v8h11V2.5H7M7 3.5h5" /><path d="M3 7h8M3 9.5h8M3 11.5h8" strokeDasharray="2 1" /><circle cx="3" cy="3" r="2.5" fill="#fff" /></svg>
      <Stats>
        <span>平均值: 59.33333333</span>
        <span>计数: 39</span>
        <span>求和: 712</span>
      </Stats>
      <ViewControls>
        <ViewButton $active aria-label="普通">
          <svg width="13" height="13" viewBox="0 0 13 13" fill="none" stroke="#fff"><path d="M.5 .5h12v12H.5zM4.5 .5v12M8.5 .5v12M.5 4.5h12M.5 8.5h12" /></svg>
        </ViewButton>
        <ViewButton aria-label="页面布局">
          <svg width="13" height="13" viewBox="0 0 13 13" fill="none" stroke="#fff"><path d="M.5 .5h12v12H.5zM3.5 2.5h6v8h-6zM5 4.5h3M5 6.5h3M5 8.5h3" /></svg>
        </ViewButton>
        <ViewButton aria-label="分页预览">
          <svg width="14" height="13" viewBox="0 0 14 13" fill="none" stroke="#fff"><path d="M.5 .5h13v12H.5z" /><path d="M1 1h3.5v7H1zM6 1h3v5H6z" fill="#fff" /></svg>
        </ViewButton>
        <ZoomStep aria-label="缩小"><svg width="8" height="8" viewBox="0 0 8 8" stroke="#cfe3d7"><path d="M0 4.5h8" /></svg></ZoomStep>
        <ZoomRange type="range" aria-label="显示比例" min="0" max="200" defaultValue="100" />
        <ZoomStep aria-label="放大"><svg width="8" height="8" viewBox="0 0 8 8" stroke="#cfe3d7"><path d="M0 4.5h8M4.5 0v8" /></svg></ZoomStep>
        <ZoomValue>100%</ZoomValue>
      </ViewControls>
    </StatusBar>
  );
}

export default function App() {
  return (
    <Page>
      <GlobalStyle />
      <TopHeader />
      <Ball>80</Ball>
      <RibbonArea />
      <Formula />
      <Workspace>
        <Sheet>
          <SheetGrid />
          <BlueRange />
          <PurpleRange>
            <Knob $side="left" $edge="top" />
            <Knob $side="right" $edge="top" />
            <Knob $side="left" $edge="bottom" />
            <Knob $side="right" $edge="bottom" />
          </PurpleRange>
          <SalesChart />
          <Tools />
        </Sheet>
        <VScroll>
          <ScrollButton aria-label="向上滚动"><Caret dir="up" size={8} /></ScrollButton>
          <Thumb $size={9} />
          <Gap $size={1} />
          <ScrollButton aria-label="向下滚动"><Caret size={8} /></ScrollButton>
        </VScroll>
      </Workspace>
      <SheetTabs />
      <Status />
      <BaiduMark />
    </Page>
  );
}
